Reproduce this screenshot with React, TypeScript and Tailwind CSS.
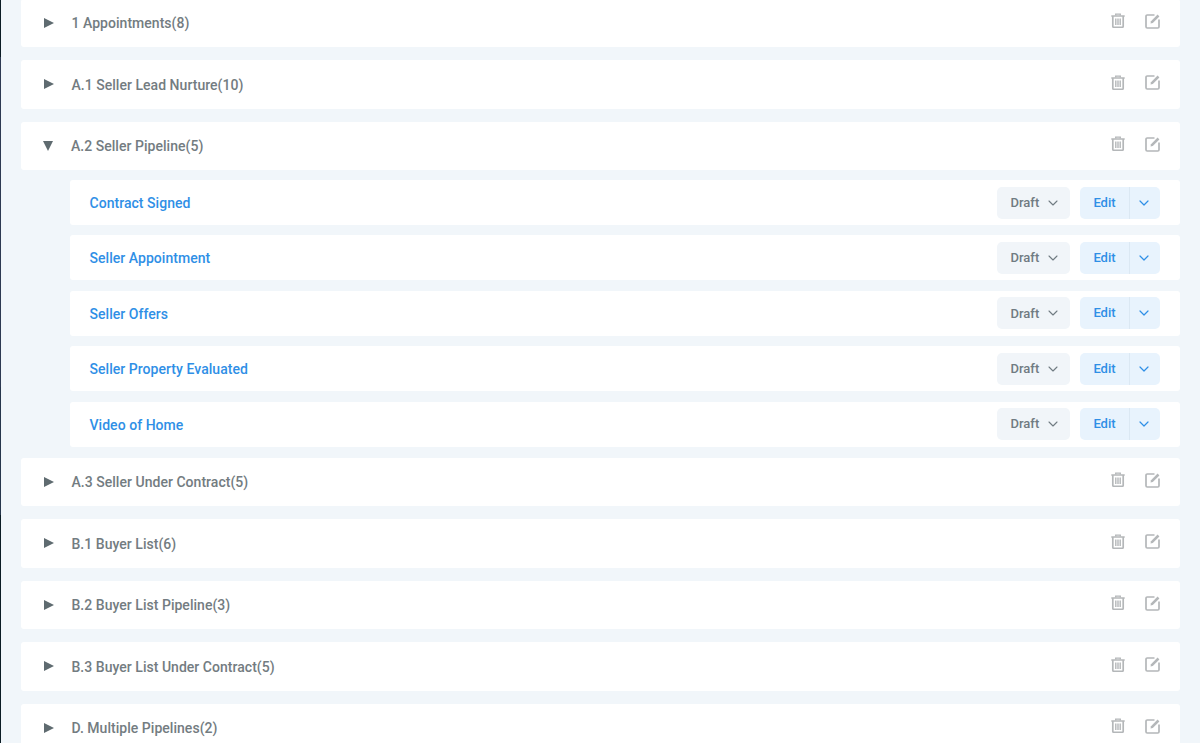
import { ChevronDown } from "lucide-react";

const before = ["1 Appointments(8)", "A.1 Seller Lead Nurture(10)"];
const after = [
  "A.3 Seller Under Contract(5)",
  "B.1 Buyer List(6)",
  "B.2 Buyer List Pipeline(3)",
  "B.3 Buyer List Under Contract(5)",
  "D. Multiple Pipelines(2)",
];
const funnels = [
  "Contract Signed",
  "Seller Appointment",
  "Seller Offers",
  "Seller Property Evaluated",
  "Video of Home",
];

const TrashIcon = () => (
  <svg viewBox="0 0 14 15" className="h-[15px] w-[14px]" fill="none" stroke="currentColor">
    <path d="M0.3 3h13.4" strokeWidth="1.5" />
    <path d="M4.7 2.6V1.2h4.6v1.4" strokeWidth="1.3" />
    <path d="M1.8 3v10.2c0 .7.5 1.2 1.2 1.2h8c.7 0 1.2-.5 1.2-1.2V3" strokeWidth="1.7" />
    <path d="M4.8 5.5v6.5M7 5.5v6.5M9.2 5.5v6.5" strokeWidth="1.4" />
  </svg>
);

const EditIcon = () => (
  <svg viewBox="0 0 16 16" className="h-[16px] w-[16px]" fill="none" stroke="currentColor">
    <path
      d="M9.5 2H2.2C1.5 2 1 2.5 1 3.2v10.6c0 .7.5 1.2 1.2 1.2h10.6c.7 0 1.2-.5 1.2-1.2V6.5"
      strokeWidth="1.7"
    />
    <path d="M6 8.2 12.6 1.6l1.8 1.8L7.8 10l-2.3.5z" fill="currentColor" stroke="none" />
  </svg>
);

const Folder = ({ title, open = false }: { title: string; open?: boolean }) => (
  <div className="flex h-[48.5px] shrink-0 items-center rounded-[3px] bg-white pl-[22px] pr-[19px]">
    {open ? (
      <span className="h-0 w-0 border-x-[5.5px] border-t-[10px] border-x-transparent border-t-[#5f6b70]" />
    ) : (
      <span className="ml-[0.5px] h-0 w-0 border-y-[5px] border-l-[10px] border-y-transparent border-l-[#5f6b70]" />
    )}
    <span className="ml-[18px] translate-y-[1px] text-[14px] font-medium tracking-[0.03px] text-[#737c81]">
      {title}
    </span>
    <div className="ml-auto flex -translate-y-[2px] items-center gap-[20px] text-[#b4b7b9]">
      <TrashIcon />
      <EditIcon />
    </div>
  </div>
);

const FunnelRow = ({ name }: { name: string }) => (
  <div className="flex h-[45px] shrink-0 items-center rounded-[3px] bg-white pl-[20px] pr-[20px]">
    <a className="-ml-[0.5px] translate-y-[1px] text-[14px] font-medium tracking-[0.04px] text-[#2f8fe6]">
      {name}
    </a>
    <div className="ml-auto flex items-center gap-[10px] text-[13px] font-medium">
      <button className="flex h-[32px] w-[73px] items-center rounded-[5px] bg-[#f1f5f9] pl-[13.5px] text-[#707b82]">
        Draft
        <ChevronDown className="ml-[6px] h-[16px] w-[16px]" strokeWidth={1.6} />
      </button>
      <div className="flex h-[32px] w-[80px] items-center rounded-[5px] bg-[#e8f3fd] text-[#2f8fe6]">
        <span className="w-[50px] border-r border-[#dbe8f3] text-center leading-[32px]">Edit</span>
        <ChevronDown className="ml-[6px] h-[16px] w-[16px]" strokeWidth={1.8} />
      </div>
    </div>
  </div>
);

export default function App() {
  return (
    <div className="relative h-[743px] overflow-hidden bg-[#f1f6fa] font-['Roboto',sans-serif]">
      {/* edge of the sidebar behind the page */}
      <div className="absolute left-0 top-0 flex h-full w-[1px] flex-col">
        <div className="h-[57px] bg-[#0b1c24]" />
        <div className="h-[330px] bg-[#2d3a52]" />
        <div className="h-[128px] bg-[#27364c]" />
        <div className="flex-1 bg-[#0b1c24]" />
      </div>

      <div className="-mt-[1.5px] flex flex-col gap-[13px] pl-[21px] pr-[20px]">
        {before.map((t) => (
          <Folder key={t} title={t} />
        ))}
        <div className="-mb-[2px] flex flex-col">
          <Folder title="A.2 Seller Pipeline(5)" open />
          <div className="ml-[49px] mt-[10px] flex flex-col gap-[10.4px]">
            {funnels.map((f) => (
              <FunnelRow key={f} name={f} />
            ))}
          </div>
        </div>
        {after.map((t) => (
          <Folder key={t} title={t} />
        ))}
      </div>
    </div>
  );
}
